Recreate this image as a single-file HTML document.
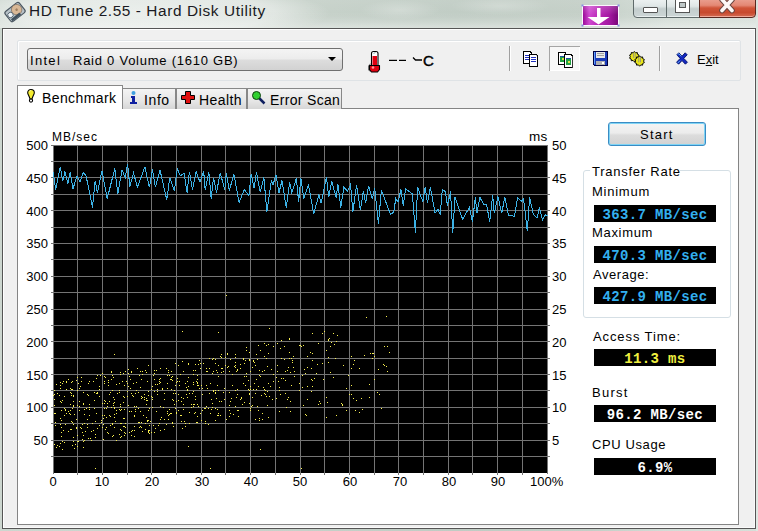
<!DOCTYPE html>
<html><head><meta charset="utf-8">
<style>
*{margin:0;padding:0;box-sizing:border-box}
html,body{width:758px;height:531px;overflow:hidden}
body{position:relative;font-family:"Liberation Sans",sans-serif;color:#000;
background:linear-gradient(90deg,#cdd7d0 0%,#c6d1c9 40%,#c0ccc4 60%,#c4cfc7 78%,#d3dcd6 88%,#d6dfd9 100%)}
.a{position:absolute}
.t{position:absolute;white-space:nowrap;line-height:1}
#title{left:29px;top:3px;font-size:15.4px;color:#1a1a22;letter-spacing:0.58px}
#client{left:2px;top:28px;width:754px;height:501px;background:#f0f0f0;border:1px solid #555;box-shadow:inset 1px 1px 0 #fff,inset -1px -1px 0 #fafafa}
#tb{left:17px;top:40px;width:724px;height:41px;border:1px solid #dfe3e6;border-radius:2px;box-shadow:inset 1px 1px 0 #fff}
#combo{left:27px;top:48px;width:316px;height:23px;border:1px solid #707070;border-radius:3px;
background:linear-gradient(#f4f4f4 0%,#ececec 48%,#dddddd 52%,#d2d2d2 100%)}
.lbl{font-size:13px}
#panel{left:17px;top:108px;width:722px;height:417px;background:#fff;border:1px solid #848484}
.tab{position:absolute;top:88px;height:21px;border:1px solid #888;border-bottom:none;
background:linear-gradient(#f4f4f4,#e6e6e6 60%,#d6d6d6)}
#tab1{left:17px;top:85px;width:106px;height:24px;background:#fff;z-index:2}
.box{position:absolute;left:594px;width:122px;height:17px;background:#000;color:#33b0f0;font-family:"Liberation Mono",monospace;font-weight:bold;font-size:14px;text-align:center;line-height:20px;letter-spacing:0.35px;overflow:hidden;white-space:nowrap}
</style></head><body>
<!-- title bar -->
<div class="a" style="left:0;top:0;width:758px;height:28px;background:radial-gradient(ellipse 185px 28px at 145px 13px,rgba(255,255,255,.62),rgba(255,255,255,.45) 70%,rgba(255,255,255,0) 100%),radial-gradient(ellipse 40px 10px at 400px 10px,rgba(255,255,255,.25),rgba(255,255,255,0)),radial-gradient(ellipse 50px 9px at 500px 6px,rgba(255,255,255,.22),rgba(255,255,255,0))"></div>
<div class="a" style="left:0;top:0;width:758px;height:28px;background:linear-gradient(rgba(255,255,255,.08),rgba(255,255,255,0) 60%,rgba(255,255,255,.15))"></div>
<div class="a" style="left:0;top:12px;width:758px;height:16px;background:linear-gradient(rgba(255,255,255,0),rgba(255,255,255,.12) 60%,rgba(255,255,255,.3))"></div>
<svg class="a" style="left:1px;top:-1px" width="26" height="25" viewBox="0 0 26 25"><g transform="translate(1.5 1.6) scale(.9)">
<g transform="rotate(-38 14 12)"><rect x="3.5" y="5.5" width="20" height="14" rx="2.5" fill="#b8c2c8" stroke="#4a5660" stroke-width="1.3"/>
<circle cx="16.5" cy="11.5" r="5.8" fill="#d9b896" stroke="#6a5a4a" stroke-width=".6"/><circle cx="16.5" cy="11.5" r="1.4" fill="#a08060"/>
<circle cx="7.5" cy="12" r="3" fill="#eef4f8" stroke="#50606c" stroke-width="1"/><rect x="5" y="16" width="12" height="3" fill="#40505c"/></g></g></svg>
<div id="title" class="t">HD Tune 2.55 - Hard Disk Utility</div>
<!-- purple button -->
<div class="a" style="left:582px;top:5px;width:37px;height:21px;border:1px solid #fdf6ff;background:linear-gradient(90deg,#9a0a98,#cf48cf 18%,#b828b6 45%,#a418a2 75%,#7a067a)"></div>
<div class="a" style="left:583px;top:6px;width:35px;height:9px;background:linear-gradient(rgba(255,255,255,.18),rgba(255,255,255,0))"></div>
<svg class="a" style="left:580px;top:3px" width="41" height="25"><g fill="#8890e0"><rect x="1.5" y="1.5" width="2" height="2"/><rect x="37.5" y="1.5" width="2" height="2"/><rect x="1.5" y="21.5" width="2" height="2"/><rect x="37.5" y="21.5" width="2" height="2"/></g>
<path d="M17 5h3.5v9h9l-11 7.5-11-7.5h9.5z" fill="#fff"/></svg>
<!-- caption buttons -->
<div class="a" style="left:633px;top:-2px;width:34px;height:20px;border:1px solid #5f6a6a;border-radius:0 0 0 4px;background:linear-gradient(#eef2f2,#dfe6e6 40%,#c3cdcd 55%,#cdd6d6);box-shadow:inset 0 -1px 0 #e8eeee"></div>
<div class="a" style="left:666px;top:-2px;width:34px;height:20px;border:1px solid #5f6a6a;background:linear-gradient(#eef2f2,#dfe6e6 40%,#c3cdcd 55%,#cdd6d6);box-shadow:inset 0 -1px 0 #e8eeee"></div>
<div class="a" style="left:699px;top:-2px;width:57px;height:20px;border:1px solid #5a2820;border-radius:0 0 4px 0;background:linear-gradient(#eaa090,#e48874 35%,#cf5438 50%,#c84a2e 75%,#d46c54);box-shadow:inset 0 -1px 0 #f0a898"></div>
<div class="a" style="left:643px;top:7px;width:15px;height:6px;background:#fff;border:1px solid #555;border-radius:1px"></div>
<div class="a" style="left:675px;top:-3px;width:15px;height:16px;background:#fff;border:1px solid #555"></div>
<div class="a" style="left:679px;top:2px;width:7px;height:6px;background:#bfc8c8;border:1px solid #555"></div>
<svg class="a" style="left:716px;top:-4px" width="22" height="20" viewBox="0 0 22 20">
<path d="M6 3.5L16 14.5M16 3.5L6 14.5" stroke="#6b4640" stroke-width="5.6" stroke-linecap="round"/>
<path d="M6 3.5L16 14.5M16 3.5L6 14.5" stroke="#fdf8f6" stroke-width="3.6" stroke-linecap="round"/></svg>

<div class="a" style="left:756px;top:17px;width:2px;height:514px;background:#dfe7e2"></div>
<div id="client" class="a"></div>
<div id="tb" class="a"></div>
<div id="combo" class="a"></div>
<div class="t lbl" style="left:30px;top:54px;letter-spacing:1.3px">Intel</div>
<div class="t lbl" style="left:73px;top:54px;letter-spacing:0.75px">Raid 0 Volume (1610 GB)</div>
<svg class="a" style="left:328px;top:57px" width="9" height="5"><path d="M0 0h8l-4 4z" fill="#000"/></svg>
<!-- thermometer -->
<svg class="a" style="left:367px;top:50px" width="14" height="23" viewBox="0 0 14 23">
<path d="M3.5 13l-2.5 3v4l2.5 2z" fill="#777"/>
<rect x="4.5" y="1.5" width="6.5" height="15" rx="2" fill="#fff" stroke="#000" stroke-width="1.1"/>
<rect x="5.5" y="6" width="4.5" height="11" fill="#e00010"/>
<path d="M6.5 3.5l2 -1" stroke="#8aa" stroke-width="1"/>
<path d="M2.5 15.5h10v4l-2 2.5h-6l-2-2.5z" fill="#e00010" stroke="#000" stroke-width="1.1" stroke-linejoin="round"/>
<circle cx="6" cy="17.5" r="1.3" fill="#ff9a9a"/>
</svg>
<div class="a" style="left:389px;top:60px;width:8px;height:1px;background:#000"></div>
<div class="a" style="left:389px;top:59px;width:8px;height:1px;background:#bbb"></div>
<div class="a" style="left:399px;top:60px;width:7px;height:1px;background:#000"></div>
<div class="a" style="left:399px;top:59px;width:7px;height:1px;background:#bbb"></div>
<svg class="a" style="left:411px;top:55px" width="12" height="8"><path d="M2 2.5l2.5 2.5H11" fill="none" stroke="#000" stroke-width="1.3"/></svg>
<div class="t" style="left:423px;top:53px;font-size:15px;-webkit-text-stroke:0.45px #000">C</div>
<!-- separators -->
<div class="a" style="left:509px;top:46px;width:1px;height:25px;background:#a0a0a0;box-shadow:1px 0 0 #fff"></div>
<div class="a" style="left:659px;top:46px;width:1px;height:25px;background:#a0a0a0;box-shadow:1px 0 0 #fff"></div>
<!-- icons -->
<svg class="a" style="left:522px;top:50px" width="18" height="18" viewBox="0 0 18 18" shape-rendering="crispEdges">
<path d="M1 1h7l2 2v11H1z" fill="#000"/><path d="M2 2h6v1h1v10H2z" fill="#fff"/>
<path d="M3 5h6v1H3zM3 7h6v1H3zM3 9h6v1H3z" fill="#2030c0"/>
<path d="M7 4h7l2 2v11H7z" fill="#000"/><path d="M8 5h5l1 1h1v10H8z" fill="#fff"/><path d="M13 5h1v1h1v-1h-1z" fill="#aaa"/>
<path d="M9 7h5v1H9zM9 9h5v1H9zM9 11h5v1H9z" fill="#2030c0"/></svg>
<div class="a" style="left:549px;top:46px;width:31px;height:25px;background:#f7f7f7;border-top:1px solid #a5a5a5;border-left:1px solid #a5a5a5;box-shadow:inset -1px -1px 0 #fff"></div>
<svg class="a" style="left:557px;top:51px" width="18" height="18" viewBox="0 0 18 18" shape-rendering="crispEdges">
<path d="M1 1h7l1 1v12H1z" fill="#000"/><path d="M2 2h6v11H2z" fill="#fff"/>
<rect x="3" y="5" width="5" height="6" fill="#20a040"/><rect x="3" y="5" width="5" height="1" fill="#2050a0"/><rect x="5" y="7" width="2" height="2" fill="#d8e040"/>
<path d="M7 3h7l2 2v12H7z" fill="#000"/><path d="M8 4h5l1 1h1v11H8z" fill="#fff"/><path d="M13 4h1v1h1" fill="#999"/>
<rect x="9" y="7" width="5" height="7" fill="#20a040"/><rect x="9" y="7" width="5" height="1" fill="#2050a0"/><rect x="11" y="10" width="2" height="2" fill="#d8e040"/><rect x="15" y="5" width="1" height="12" fill="#333"/></svg>
<svg class="a" style="left:592px;top:50px" width="17" height="17" viewBox="0 0 17 17" shape-rendering="crispEdges">
<path d="M1 1h15v15H2l-1-1z" fill="#000040"/><rect x="2" y="2" width="13" height="13" fill="#1a3ab8"/><rect x="2" y="2" width="1" height="12" fill="#60a0ff"/>
<rect x="4" y="2" width="9" height="6" fill="#e8e8e8"/><path d="M5 3h7v1H5zM5 5h7v1H5z" fill="#a0a0a0"/>
<rect x="4" y="11" width="9" height="4" fill="#b0b0b0"/><rect x="10" y="12" width="2" height="2" fill="#fff"/></svg>
<svg class="a" style="left:627px;top:49px" width="20" height="19" viewBox="0 0 20 19"><g transform="translate(1.6 1.4) scale(.88)">
<g fill="#e8e41c" stroke="#000" stroke-width="1.1" stroke-linejoin="round">
<path d="M6.5 1.2l1.4 1.6 2-.4.2 2 1.8.9-.9 1.8.9 1.8-1.8.9-.2 2-2-.4-1.4 1.6-1.4-1.6-2 .4-.2-2-1.8-.9.9-1.8-.9-1.8 1.8-.9.2-2 2 .4z"/>
<path d="M12.5 6.2l1.4 1.6 2-.4.2 2 1.8.9-.9 1.8.9 1.8-1.8.9-.2 2-2-.4-1.4 1.6-1.4-1.6-2 .4-.2-2-1.8-.9.9-1.8-.9-1.8 1.8-.9.2-2 2 .4z"/></g>
<path d="M5.5 2.5v6M7.5 2.5v6M11.5 7.5v6M13.5 7.5v6" stroke="#8a8a8a" stroke-width=".9"/></g></svg>
<svg class="a" style="left:675px;top:52px" width="14" height="14" viewBox="0 0 14 14">
<path d="M1.8 2.8l2-2 3.2 3.4 3.2-3.4 2 2-3.4 3.6 3.6 3.8-2 2-3.4-3.6-3.4 3.6-2-2 3.6-3.8z" fill="#1428c0" stroke="#00106a" stroke-width=".9" stroke-linejoin="round"/>
<path d="M2.6 2.8l1.2-1.1 2.4 2.6M2.8 11l2.2-2.3" fill="none" stroke="#6ec0ff" stroke-width=".9"/></svg>
<div class="t lbl" style="left:697px;top:53px">E<u>x</u>it</div>

<!-- tabs -->
<div id="panel" class="a"></div>
<div id="tab1" class="tab"></div>
<div class="tab" style="left:122px;width:54px"></div>
<div class="tab" style="left:176px;width:71px"></div>
<div class="tab" style="left:247px;width:95px"></div>
<svg class="a" style="left:26px;top:88px;z-index:3" width="10" height="15" viewBox="0 0 10 15">
<path d="M5 1.5c2 0 3.3 1.4 3.3 3.2 0 1.6-1.6 3.2-2.3 6.3h-2C3.3 7.9 1.7 6.3 1.7 4.7 1.7 2.9 3 1.5 5 1.5z" fill="#f4ec30" stroke="#000" stroke-width="1.1"/>
<path d="M3.2 3.5q.8-1 2-1" stroke="#fffbc0" fill="none" stroke-width=".9"/>
<circle cx="5" cy="12.6" r="1.6" fill="#fff" stroke="#000" stroke-width="1.1"/></svg>
<div class="t" style="left:42px;top:91px;font-size:14px;z-index:3;letter-spacing:0.4px">Benchmark</div>
<svg class="a" style="left:129px;top:91px" width="9" height="13" viewBox="0 0 9 13"><circle cx="4.5" cy="2" r="2" fill="#40a0e0"/><path d="M2 5h4v6h2v2H1v-2h2V7H2z" fill="#1020a0"/></svg>
<div class="t" style="left:144px;top:93px;font-size:14px;letter-spacing:0.6px">Info</div>
<svg class="a" style="left:181px;top:91px" width="14" height="13" viewBox="0 0 14 13"><path d="M4.5 .5h5v4h4v4h-4v4h-5v-4h-4v-4h4z" fill="#e01010" stroke="#000"/></svg>
<div class="t" style="left:199px;top:93px;font-size:14px;letter-spacing:0.4px">Health</div>
<svg class="a" style="left:252px;top:91px" width="14" height="14" viewBox="0 0 14 14"><path d="M6 6l6.5 6.5" stroke="#102060" stroke-width="2.5"/><circle cx="4.5" cy="4.5" r="4" fill="#30d030" stroke="#104010"/></svg>
<div class="t" style="left:270px;top:93px;font-size:14px;letter-spacing:0.33px">Error Scan</div>

<!-- chart -->
<div class="t" style="left:52px;top:131px;font-size:12px;letter-spacing:1px">MB/sec</div>
<div class="t" style="left:529px;top:130px;font-size:13.5px;letter-spacing:0.3px">ms</div>
<svg class="a" style="left:0;top:0" width="758" height="531">
<g transform="translate(53 145)">
<rect x="0" y="0" width="495" height="328" fill="#000"/>
<path d="M24.5 0V328M49.5 0V328M74.5 0V328M98.5 0V328M123.5 0V328M148.5 0V328M172.5 0V328M197.5 0V328M222.5 0V328M247.5 0V328M271.5 0V328M296.5 0V328M321.5 0V328M345.5 0V328M370.5 0V328M395.5 0V328M419.5 0V328M444.5 0V328M469.5 0V328M0 16.5H495M0 32.5H495M0 49.5H495M0 65.5H495M0 82.5H495M0 98.5H495M0 114.5H495M0 131.5H495M0 147.5H495M0 164.5H495M0 180.5H495M0 196.5H495M0 213.5H495M0 229.5H495M0 245.5H495M0 262.5H495M0 278.5H495M0 295.5H495M0 311.5H495" stroke="#747474" stroke-width="1"/><path d="M-2 0.5H495M0.5 0V329M494.5 0V329" stroke="#747474"/><path d="M-2 16.5H0M495 16.5H497M-2 32.5H0M495 32.5H497M-2 49.5H0M495 49.5H497M-2 65.5H0M495 65.5H497M-2 82.5H0M495 82.5H497M-2 98.5H0M495 98.5H497M-2 114.5H0M495 114.5H497M-2 131.5H0M495 131.5H497M-2 147.5H0M495 147.5H497M-2 164.5H0M495 164.5H497M-2 180.5H0M495 180.5H497M-2 196.5H0M495 196.5H497M-2 213.5H0M495 213.5H497M-2 229.5H0M495 229.5H497M-2 245.5H0M495 245.5H497M-2 262.5H0M495 262.5H497M-2 278.5H0M495 278.5H497M-2 295.5H0M495 295.5H497M-2 311.5H0M495 311.5H497M24.5 328V330M49.5 328V330M74.5 328V330M98.5 328V330M123.5 328V330M148.5 328V330M172.5 328V330M197.5 328V330M222.5 328V330M247.5 328V330M271.5 328V330M296.5 328V330M321.5 328V330M345.5 328V330M370.5 328V330M395.5 328V330M419.5 328V330M444.5 328V330M469.5 328V330" stroke="#747474"/>
<path d="M0.0 26.6 L2.7 44.6 L7.2 22.0 L9.8 36.0 L12.0 26.6 L14.8 38.6 L17.3 27.3 L19.9 43.9 L24.1 31.0 L27.1 37.0 L30.1 27.3 L33.1 31.0 L39.5 62.7 L42.2 35.6 L44.4 47.6 L49.0 25.8 L54.2 53.7 L61.8 23.5 L64.8 49.0 L69.0 25.0 L72.3 32.6 L74.6 19.0 L76.8 41.6 L80.6 28.0 L84.3 42.4 L91.9 22.0 L96.4 42.4 L99.4 24.3 L102.4 42.4 L107.0 25.0 L113.8 55.0 L116.8 32.6 L121.3 46.0 L124.3 23.5 L127.3 31.0 L131.0 28.0 L134.1 47.6 L136.4 26.6 L139.4 44.6 L143.1 26.6 L146.9 37.0 L150.7 26.6 L152.2 44.6 L155.9 27.3 L158.2 53.7 L160.5 32.6 L163.5 47.6 L167.2 28.0 L171.8 44.6 L173.3 28.0 L176.3 46.0 L180.8 28.8 L186.1 57.4 L191.3 44.6 L195.9 50.7 L198.1 28.8 L201.1 43.1 L203.4 27.3 L207.2 46.9 L210.9 32.6 L213.9 67.2 L218.4 35.6 L220.0 40.0 L223.0 29.6 L226.0 47.6 L229.0 35.6 L233.3 62.7 L236.6 37.0 L238.8 47.6 L243.4 33.3 L245.6 56.7 L247.9 33.3 L250.9 53.7 L255.4 39.4 L260.7 68.7 L265.9 49.9 L268.2 58.2 L273.5 31.8 L275.7 52.2 L278.7 36.4 L283.3 52.9 L284.8 38.6 L287.8 62.7 L290.8 42.4 L294.6 46.0 L297.6 39.4 L299.8 67.2 L303.6 40.0 L307.4 65.0 L310.4 46.0 L312.6 58.2 L315.6 40.9 L319.4 53.7 L321.7 43.0 L325.4 78.5 L328.4 45.0 L337.5 69.5 L340.6 67.2 L342.8 53.7 L345.0 56.7 L348.0 44.6 L350.3 60.5 L352.6 43.9 L359.4 49.0 L362.4 88.3 L364.6 42.4 L369.9 56.7 L372.2 41.6 L374.4 58.2 L377.4 42.4 L382.0 68.0 L385.0 64.2 L387.2 69.5 L389.3 44.8 L392.3 46.4 L394.5 60.7 L397.5 46.4 L399.8 87.8 L402.0 52.4 L409.6 74.2 L416.4 62.2 L419.4 76.5 L422.4 52.4 L423.9 68.2 L426.9 52.4 L430.7 59.2 L433.7 59.9 L436.7 77.2 L439.7 50.1 L441.2 68.2 L445.0 51.6 L448.7 68.2 L451.8 52.4 L455.5 70.5 L461.5 71.2 L464.6 52.4 L468.3 56.1 L470.6 53.9 L474.3 86.3 L476.6 52.4 L480.4 69.7 L484.1 72.7 L486.4 62.2 L489.4 75.0 L492.4 69.7 L494.7 71.2" fill="none" stroke="#3cb2e6" stroke-width="1" shape-rendering="crispEdges"/>
<path d="M0 250h1v1h-1zM1 245h1v1h-1zM1 249h1v1h-1zM1 254h1v1h-1zM1 260h1v1h-1zM1 268h1v1h-1zM1 299h1v1h-1zM2 268h1v1h-1zM2 277h1v1h-1zM2 280h1v1h-1zM3 239h1v1h-1zM3 302h1v1h-1zM4 248h1v1h-1zM4 300h1v1h-1zM6 250h1v1h-1zM6 301h1v1h-1zM7 237h1v1h-1zM7 240h1v1h-1zM7 243h1v1h-1zM7 256h1v1h-1zM7 273h1v1h-1zM7 279h1v1h-1zM7 298h1v1h-1zM8 257h1v1h-1zM8 265h1v1h-1zM8 275h1v1h-1zM8 282h1v1h-1zM8 287h1v1h-1zM8 291h1v1h-1zM9 238h1v1h-1zM9 255h1v1h-1zM9 296h1v1h-1zM9 304h1v1h-1zM10 236h1v1h-1zM10 285h1v1h-1zM11 251h1v1h-1zM11 263h1v1h-1zM11 270h1v1h-1zM11 297h1v1h-1zM12 264h1v1h-1zM12 265h1v1h-1zM12 279h1v1h-1zM13 236h1v1h-1zM13 237h1v1h-1zM13 244h1v1h-1zM13 268h1v1h-1zM15 234h1v1h-1zM15 266h1v1h-1zM15 286h1v1h-1zM16 268h1v1h-1zM17 243h1v1h-1zM17 247h1v1h-1zM17 259h1v1h-1zM17 265h1v1h-1zM17 269h1v1h-1zM17 284h1v1h-1zM18 237h1v1h-1zM18 244h1v1h-1zM18 248h1v1h-1zM18 250h1v1h-1zM18 276h1v1h-1zM18 284h1v1h-1zM19 236h1v1h-1zM19 244h1v1h-1zM19 263h1v1h-1zM19 277h1v1h-1zM19 300h1v1h-1zM20 250h1v1h-1zM20 251h1v1h-1zM20 256h1v1h-1zM20 260h1v1h-1zM20 261h1v1h-1zM20 279h1v1h-1zM20 292h1v1h-1zM20 296h1v1h-1zM21 269h1v1h-1zM21 303h1v1h-1zM22 299h1v1h-1zM23 235h1v1h-1zM23 274h1v1h-1zM23 282h1v1h-1zM23 283h1v1h-1zM24 232h1v1h-1zM24 245h1v1h-1zM24 260h1v1h-1zM24 290h1v1h-1zM24 296h1v1h-1zM24 301h1v1h-1zM25 238h1v1h-1zM25 296h1v1h-1zM26 243h1v1h-1zM26 256h1v1h-1zM26 261h1v1h-1zM26 265h1v1h-1zM27 241h1v1h-1zM27 282h1v1h-1zM28 232h1v1h-1zM28 236h1v1h-1zM28 283h1v1h-1zM29 279h1v1h-1zM29 287h1v1h-1zM29 294h1v1h-1zM30 247h1v1h-1zM30 258h1v1h-1zM30 259h1v1h-1zM30 290h1v1h-1zM30 296h1v1h-1zM30 302h1v1h-1zM31 264h1v1h-1zM31 269h1v1h-1zM31 278h1v1h-1zM31 295h1v1h-1zM32 286h1v1h-1zM33 263h1v1h-1zM34 249h1v1h-1zM34 274h1v1h-1zM34 279h1v1h-1zM34 282h1v1h-1zM35 238h1v1h-1zM35 250h1v1h-1zM35 293h1v1h-1zM36 236h1v1h-1zM36 259h1v1h-1zM36 262h1v1h-1zM36 264h1v1h-1zM36 270h1v1h-1zM37 293h1v1h-1zM38 286h1v1h-1zM38 295h1v1h-1zM39 278h1v1h-1zM40 236h1v1h-1zM40 285h1v1h-1zM41 247h1v1h-1zM41 255h1v1h-1zM41 263h1v1h-1zM42 276h1v1h-1zM42 289h1v1h-1zM42 292h1v1h-1zM42 323h1v1h-1zM43 233h1v1h-1zM43 248h1v1h-1zM43 268h1v1h-1zM44 230h1v1h-1zM44 247h1v1h-1zM44 248h1v1h-1zM44 283h1v1h-1zM46 241h1v1h-1zM46 244h1v1h-1zM46 251h1v1h-1zM46 280h1v1h-1zM47 230h1v1h-1zM48 275h1v1h-1zM48 277h1v1h-1zM49 228h1v1h-1zM49 258h1v1h-1zM49 270h1v1h-1zM49 282h1v1h-1zM50 273h1v1h-1zM50 279h1v1h-1zM50 294h1v1h-1zM51 231h1v1h-1zM51 236h1v1h-1zM51 238h1v1h-1zM51 255h1v1h-1zM51 258h1v1h-1zM51 263h1v1h-1zM51 270h1v1h-1zM52 232h1v1h-1zM52 256h1v1h-1zM52 284h1v1h-1zM53 263h1v1h-1zM53 272h1v1h-1zM53 282h1v1h-1zM54 258h1v1h-1zM54 261h1v1h-1zM54 287h1v1h-1zM55 235h1v1h-1zM55 237h1v1h-1zM55 240h1v1h-1zM55 288h1v1h-1zM56 249h1v1h-1zM56 256h1v1h-1zM56 270h1v1h-1zM57 247h1v1h-1zM57 271h1v1h-1zM57 280h1v1h-1zM58 226h1v1h-1zM58 227h1v1h-1zM58 234h1v1h-1zM58 262h1v1h-1zM59 230h1v1h-1zM59 245h1v1h-1zM59 278h1v1h-1zM59 279h1v1h-1zM59 291h1v1h-1zM60 232h1v1h-1zM60 252h1v1h-1zM60 258h1v1h-1zM60 260h1v1h-1zM60 290h1v1h-1zM61 209h1v1h-1zM61 254h1v1h-1zM61 257h1v1h-1zM61 262h1v1h-1zM61 263h1v1h-1zM61 269h1v1h-1zM61 272h1v1h-1zM61 282h1v1h-1zM62 276h1v1h-1zM63 239h1v1h-1zM63 265h1v1h-1zM63 268h1v1h-1zM63 295h1v1h-1zM64 248h1v1h-1zM66 238h1v1h-1zM66 245h1v1h-1zM66 247h1v1h-1zM66 264h1v1h-1zM66 289h1v1h-1zM67 227h1v1h-1zM67 229h1v1h-1zM67 259h1v1h-1zM67 261h1v1h-1zM67 265h1v1h-1zM67 278h1v1h-1zM67 284h1v1h-1zM67 292h1v1h-1zM68 264h1v1h-1zM68 278h1v1h-1zM68 285h1v1h-1zM68 291h1v1h-1zM69 236h1v1h-1zM70 228h1v1h-1zM70 251h1v1h-1zM70 257h1v1h-1zM70 273h1v1h-1zM70 281h1v1h-1zM71 240h1v1h-1zM71 252h1v1h-1zM71 264h1v1h-1zM71 273h1v1h-1zM71 281h1v1h-1zM71 287h1v1h-1zM71 290h1v1h-1zM72 226h1v1h-1zM72 278h1v1h-1zM72 282h1v1h-1zM72 288h1v1h-1zM73 236h1v1h-1zM74 238h1v1h-1zM74 246h1v1h-1zM74 251h1v1h-1zM75 224h1v1h-1zM75 228h1v1h-1zM75 241h1v1h-1zM75 260h1v1h-1zM76 231h1v1h-1zM76 266h1v1h-1zM76 287h1v1h-1zM77 234h1v1h-1zM77 243h1v1h-1zM78 226h1v1h-1zM78 227h1v1h-1zM78 248h1v1h-1zM78 266h1v1h-1zM78 286h1v1h-1zM78 290h1v1h-1zM79 250h1v1h-1zM79 285h1v1h-1zM80 238h1v1h-1zM80 251h1v1h-1zM81 261h1v1h-1zM81 270h1v1h-1zM81 271h1v1h-1zM81 281h1v1h-1zM81 285h1v1h-1zM81 291h1v1h-1zM82 248h1v1h-1zM82 264h1v1h-1zM82 266h1v1h-1zM83 237h1v1h-1zM83 245h1v1h-1zM83 261h1v1h-1zM84 223h1v1h-1zM85 247h1v1h-1zM85 263h1v1h-1zM85 277h1v1h-1zM86 230h1v1h-1zM86 277h1v1h-1zM86 282h1v1h-1zM87 226h1v1h-1zM87 242h1v1h-1zM87 266h1v1h-1zM87 281h1v1h-1zM88 234h1v1h-1zM88 251h1v1h-1zM88 253h1v1h-1zM88 277h1v1h-1zM88 282h1v1h-1zM89 226h1v1h-1zM89 229h1v1h-1zM89 252h1v1h-1zM89 286h1v1h-1zM90 270h1v1h-1zM91 249h1v1h-1zM91 252h1v1h-1zM91 254h1v1h-1zM92 225h1v1h-1zM92 278h1v1h-1zM92 284h1v1h-1zM93 227h1v1h-1zM93 253h1v1h-1zM93 255h1v1h-1zM93 259h1v1h-1zM93 272h1v1h-1zM94 236h1v1h-1zM94 255h1v1h-1zM94 275h1v1h-1zM94 276h1v1h-1zM95 220h1v1h-1zM95 246h1v1h-1zM95 250h1v1h-1zM95 265h1v1h-1zM95 275h1v1h-1zM95 285h1v1h-1zM95 286h1v1h-1zM95 287h1v1h-1zM96 263h1v1h-1zM96 280h1v1h-1zM96 285h1v1h-1zM96 288h1v1h-1zM97 276h1v1h-1zM98 244h1v1h-1zM98 251h1v1h-1zM98 287h1v1h-1zM99 241h1v1h-1zM99 252h1v1h-1zM99 254h1v1h-1zM99 262h1v1h-1zM100 230h1v1h-1zM100 280h1v1h-1zM101 225h1v1h-1zM101 228h1v1h-1zM101 234h1v1h-1zM101 246h1v1h-1zM101 287h1v1h-1zM102 239h1v1h-1zM102 283h1v1h-1zM103 225h1v1h-1zM103 266h1v1h-1zM104 239h1v1h-1zM104 244h1v1h-1zM104 246h1v1h-1zM104 249h1v1h-1zM105 280h1v1h-1zM106 234h1v1h-1zM106 236h1v1h-1zM106 238h1v1h-1zM106 278h1v1h-1zM107 223h1v1h-1zM107 233h1v1h-1zM107 237h1v1h-1zM107 261h1v1h-1zM107 274h1v1h-1zM107 285h1v1h-1zM108 272h1v1h-1zM109 243h1v1h-1zM109 244h1v1h-1zM110 262h1v1h-1zM111 248h1v1h-1zM111 254h1v1h-1zM111 274h1v1h-1zM111 284h1v1h-1zM113 223h1v1h-1zM113 279h1v1h-1zM114 230h1v1h-1zM114 238h1v1h-1zM114 243h1v1h-1zM114 266h1v1h-1zM114 268h1v1h-1zM115 225h1v1h-1zM115 227h1v1h-1zM115 270h1v1h-1zM115 274h1v1h-1zM116 230h1v1h-1zM116 264h1v1h-1zM116 269h1v1h-1zM117 234h1v1h-1zM117 268h1v1h-1zM118 226h1v1h-1zM118 232h1v1h-1zM118 234h1v1h-1zM118 244h1v1h-1zM118 268h1v1h-1zM119 231h1v1h-1zM119 235h1v1h-1zM119 254h1v1h-1zM119 277h1v1h-1zM119 278h1v1h-1zM120 248h1v1h-1zM120 255h1v1h-1zM120 281h1v1h-1zM121 245h1v1h-1zM121 259h1v1h-1zM122 218h1v1h-1zM122 240h1v1h-1zM122 248h1v1h-1zM122 263h1v1h-1zM123 237h1v1h-1zM123 256h1v1h-1zM123 267h1v1h-1zM123 268h1v1h-1zM124 233h1v1h-1zM124 236h1v1h-1zM125 220h1v1h-1zM125 249h1v1h-1zM125 255h1v1h-1zM125 265h1v1h-1zM126 236h1v1h-1zM126 240h1v1h-1zM127 229h1v1h-1zM127 270h1v1h-1zM128 252h1v1h-1zM128 256h1v1h-1zM128 270h1v1h-1zM128 276h1v1h-1zM129 186h1v1h-1zM129 216h1v1h-1zM129 283h1v1h-1zM130 226h1v1h-1zM130 253h1v1h-1zM130 259h1v1h-1zM130 264h1v1h-1zM131 276h1v1h-1zM132 238h1v1h-1zM132 278h1v1h-1zM132 281h1v1h-1zM133 242h1v1h-1zM133 249h1v1h-1zM134 236h1v1h-1zM134 244h1v1h-1zM134 245h1v1h-1zM134 252h1v1h-1zM135 218h1v1h-1zM135 219h1v1h-1zM135 232h1v1h-1zM135 241h1v1h-1zM135 301h1v1h-1zM136 248h1v1h-1zM136 267h1v1h-1zM136 278h1v1h-1zM138 259h1v1h-1zM138 262h1v1h-1zM139 248h1v1h-1zM140 225h1v1h-1zM140 229h1v1h-1zM140 237h1v1h-1zM140 239h1v1h-1zM140 246h1v1h-1zM140 259h1v1h-1zM140 261h1v1h-1zM141 259h1v1h-1zM141 268h1v1h-1zM142 219h1v1h-1zM142 225h1v1h-1zM142 251h1v1h-1zM142 254h1v1h-1zM142 267h1v1h-1zM143 236h1v1h-1zM143 277h1v1h-1zM144 230h1v1h-1zM144 234h1v1h-1zM144 237h1v1h-1zM144 238h1v1h-1zM144 240h1v1h-1zM144 259h1v1h-1zM144 271h1v1h-1zM144 277h1v1h-1zM145 219h1v1h-1zM145 240h1v1h-1zM145 261h1v1h-1zM146 215h1v1h-1zM146 243h1v1h-1zM147 218h1v1h-1zM147 223h1v1h-1zM147 268h1v1h-1zM148 240h1v1h-1zM148 275h1v1h-1zM149 243h1v1h-1zM149 249h1v1h-1zM149 265h1v1h-1zM150 218h1v1h-1zM151 263h1v1h-1zM152 263h1v1h-1zM152 276h1v1h-1zM152 278h1v1h-1zM153 223h1v1h-1zM153 226h1v1h-1zM153 240h1v1h-1zM153 261h1v1h-1zM154 226h1v1h-1zM154 243h1v1h-1zM155 263h1v1h-1zM155 279h1v1h-1zM156 213h1v1h-1zM156 223h1v1h-1zM156 248h1v1h-1zM157 238h1v1h-1zM157 268h1v1h-1zM157 323h1v1h-1zM158 254h1v1h-1zM158 264h1v1h-1zM159 214h1v1h-1zM159 228h1v1h-1zM159 258h1v1h-1zM159 262h1v1h-1zM160 213h1v1h-1zM160 226h1v1h-1zM160 245h1v1h-1zM160 246h1v1h-1zM162 214h1v1h-1zM162 218h1v1h-1zM162 245h1v1h-1zM162 247h1v1h-1zM162 248h1v1h-1zM162 263h1v1h-1zM162 275h1v1h-1zM163 225h1v1h-1zM163 253h1v1h-1zM164 227h1v1h-1zM164 240h1v1h-1zM164 264h1v1h-1zM164 270h1v1h-1zM165 187h1v1h-1zM165 220h1v1h-1zM165 231h1v1h-1zM165 245h1v1h-1zM165 268h1v1h-1zM165 270h1v1h-1zM166 256h1v1h-1zM167 211h1v1h-1zM167 270h1v1h-1zM168 209h1v1h-1zM168 212h1v1h-1zM168 223h1v1h-1zM168 227h1v1h-1zM168 256h1v1h-1zM169 223h1v1h-1zM170 226h1v1h-1zM170 247h1v1h-1zM171 243h1v1h-1zM171 254h1v1h-1zM172 212h1v1h-1zM172 220h1v1h-1zM173 150h1v1h-1zM173 274h1v1h-1zM174 208h1v1h-1zM174 209h1v1h-1zM174 222h1v1h-1zM175 221h1v1h-1zM176 226h1v1h-1zM176 247h1v1h-1zM176 260h1v1h-1zM176 265h1v1h-1zM176 271h1v1h-1zM177 214h1v1h-1zM177 256h1v1h-1zM177 268h1v1h-1zM178 253h1v1h-1zM179 229h1v1h-1zM179 240h1v1h-1zM180 269h1v1h-1zM181 221h1v1h-1zM182 209h1v1h-1zM182 212h1v1h-1zM182 217h1v1h-1zM182 220h1v1h-1zM182 222h1v1h-1zM182 245h1v1h-1zM182 261h1v1h-1zM183 226h1v1h-1zM183 252h1v1h-1zM184 224h1v1h-1zM184 225h1v1h-1zM184 244h1v1h-1zM184 249h1v1h-1zM184 265h1v1h-1zM185 265h1v1h-1zM185 271h1v1h-1zM187 219h1v1h-1zM187 223h1v1h-1zM187 254h1v1h-1zM188 252h1v1h-1zM188 253h1v1h-1zM189 259h1v1h-1zM190 213h1v1h-1zM190 214h1v1h-1zM190 238h1v1h-1zM191 218h1v1h-1zM191 231h1v1h-1zM191 257h1v1h-1zM192 215h1v1h-1zM192 240h1v1h-1zM193 202h1v1h-1zM193 205h1v1h-1zM193 228h1v1h-1zM193 231h1v1h-1zM195 235h1v1h-1zM195 244h1v1h-1zM196 207h1v1h-1zM196 214h1v1h-1zM196 215h1v1h-1zM196 245h1v1h-1zM196 248h1v1h-1zM196 249h1v1h-1zM196 258h1v1h-1zM197 226h1v1h-1zM197 241h1v1h-1zM197 244h1v1h-1zM197 263h1v1h-1zM197 265h1v1h-1zM198 261h1v1h-1zM199 222h1v1h-1zM199 252h1v1h-1zM199 260h1v1h-1zM200 215h1v1h-1zM200 216h1v1h-1zM200 244h1v1h-1zM201 217h1v1h-1zM201 238h1v1h-1zM202 220h1v1h-1zM202 248h1v1h-1zM202 274h1v1h-1zM203 209h1v1h-1zM203 234h1v1h-1zM203 244h1v1h-1zM204 214h1v1h-1zM204 261h1v1h-1zM205 200h1v1h-1zM205 241h1v1h-1zM205 265h1v1h-1zM206 225h1v1h-1zM206 230h1v1h-1zM206 273h1v1h-1zM206 275h1v1h-1zM207 205h1v1h-1zM207 231h1v1h-1zM207 304h1v1h-1zM208 250h1v1h-1zM209 226h1v1h-1zM209 268h1v1h-1zM209 274h1v1h-1zM210 242h1v1h-1zM211 198h1v1h-1zM211 211h1v1h-1zM211 225h1v1h-1zM211 244h1v1h-1zM211 248h1v1h-1zM212 245h1v1h-1zM212 249h1v1h-1zM213 200h1v1h-1zM213 213h1v1h-1zM213 251h1v1h-1zM214 221h1v1h-1zM214 246h1v1h-1zM214 260h1v1h-1zM215 199h1v1h-1zM215 208h1v1h-1zM215 238h1v1h-1zM215 272h1v1h-1zM216 183h1v1h-1zM216 251h1v1h-1zM217 241h1v1h-1zM218 224h1v1h-1zM219 254h1v1h-1zM220 201h1v1h-1zM220 229h1v1h-1zM220 236h1v1h-1zM223 232h1v1h-1zM223 253h1v1h-1zM224 198h1v1h-1zM224 220h1v1h-1zM224 226h1v1h-1zM225 236h1v1h-1zM226 242h1v1h-1zM226 245h1v1h-1zM226 266h1v1h-1zM227 203h1v1h-1zM227 249h1v1h-1zM228 195h1v1h-1zM228 213h1v1h-1zM228 233h1v1h-1zM230 233h1v1h-1zM231 201h1v1h-1zM231 214h1v1h-1zM232 226h1v1h-1zM232 235h1v1h-1zM232 248h1v1h-1zM233 262h1v1h-1zM234 225h1v1h-1zM234 254h1v1h-1zM235 222h1v1h-1zM235 252h1v1h-1zM236 193h1v1h-1zM236 194h1v1h-1zM236 207h1v1h-1zM236 213h1v1h-1zM237 227h1v1h-1zM237 256h1v1h-1zM237 266h1v1h-1zM238 213h1v1h-1zM238 240h1v1h-1zM239 215h1v1h-1zM239 217h1v1h-1zM240 211h1v1h-1zM240 222h1v1h-1zM241 226h1v1h-1zM241 231h1v1h-1zM246 200h1v1h-1zM246 238h1v1h-1zM246 245h1v1h-1zM247 200h1v1h-1zM248 201h1v1h-1zM248 323h1v1h-1zM249 230h1v1h-1zM249 242h1v1h-1zM250 200h1v1h-1zM250 260h1v1h-1zM251 224h1v1h-1zM252 228h1v1h-1zM252 269h1v1h-1zM253 270h1v1h-1zM254 211h1v1h-1zM254 222h1v1h-1zM254 241h1v1h-1zM254 254h1v1h-1zM257 207h1v1h-1zM258 223h1v1h-1zM258 234h1v1h-1zM258 246h1v1h-1zM259 188h1v1h-1zM259 208h1v1h-1zM259 215h1v1h-1zM259 235h1v1h-1zM259 241h1v1h-1zM261 233h1v1h-1zM263 228h1v1h-1zM264 219h1v1h-1zM265 198h1v1h-1zM265 259h1v1h-1zM266 256h1v1h-1zM267 258h1v1h-1zM269 188h1v1h-1zM269 218h1v1h-1zM270 234h1v1h-1zM271 186h1v1h-1zM273 205h1v1h-1zM273 252h1v1h-1zM273 272h1v1h-1zM274 257h1v1h-1zM275 194h1v1h-1zM275 195h1v1h-1zM275 212h1v1h-1zM275 217h1v1h-1zM276 193h1v1h-1zM277 201h1v1h-1zM277 227h1v1h-1zM278 197h1v1h-1zM280 188h1v1h-1zM280 232h1v1h-1zM281 199h1v1h-1zM282 213h1v1h-1zM283 196h1v1h-1zM283 270h1v1h-1zM284 190h1v1h-1zM288 258h1v1h-1zM289 259h1v1h-1zM289 260h1v1h-1zM290 220h1v1h-1zM293 243h1v1h-1zM293 265h1v1h-1zM295 230h1v1h-1zM296 249h1v1h-1zM298 211h1v1h-1zM298 223h1v1h-1zM298 240h1v1h-1zM298 249h1v1h-1zM300 219h1v1h-1zM300 253h1v1h-1zM301 215h1v1h-1zM302 265h1v1h-1zM303 255h1v1h-1zM306 223h1v1h-1zM306 267h1v1h-1zM308 253h1v1h-1zM309 264h1v1h-1zM311 210h1v1h-1zM313 172h1v1h-1zM316 239h1v1h-1zM316 252h1v1h-1zM317 208h1v1h-1zM319 208h1v1h-1zM319 213h1v1h-1zM320 208h1v1h-1zM321 211h1v1h-1zM321 234h1v1h-1zM324 247h1v1h-1zM325 224h1v1h-1zM326 249h1v1h-1zM328 263h1v1h-1zM330 219h1v1h-1zM331 201h1v1h-1zM331 220h1v1h-1zM333 171h1v1h-1zM333 221h1v1h-1zM334 201h1v1h-1zM334 226h1v1h-1zM336 207h1v1h-1z" fill="#f8f050" shape-rendering="crispEdges"/>
</g></svg>
<div class="t" style="right:710px;top:139px;font-size:13px">500</div>
<div class="t" style="left:552px;top:139px;font-size:13px">50</div>
<div class="t" style="right:710px;top:172px;font-size:13px">450</div>
<div class="t" style="left:552px;top:172px;font-size:13px">45</div>
<div class="t" style="right:710px;top:205px;font-size:13px">400</div>
<div class="t" style="left:552px;top:205px;font-size:13px">40</div>
<div class="t" style="right:710px;top:237px;font-size:13px">350</div>
<div class="t" style="left:552px;top:237px;font-size:13px">35</div>
<div class="t" style="right:710px;top:270px;font-size:13px">300</div>
<div class="t" style="left:552px;top:270px;font-size:13px">30</div>
<div class="t" style="right:710px;top:303px;font-size:13px">250</div>
<div class="t" style="left:552px;top:303px;font-size:13px">25</div>
<div class="t" style="right:710px;top:336px;font-size:13px">200</div>
<div class="t" style="left:552px;top:336px;font-size:13px">20</div>
<div class="t" style="right:710px;top:369px;font-size:13px">150</div>
<div class="t" style="left:552px;top:369px;font-size:13px">15</div>
<div class="t" style="right:710px;top:401px;font-size:13px">100</div>
<div class="t" style="left:552px;top:401px;font-size:13px">10</div>
<div class="t" style="right:710px;top:434px;font-size:13px">50</div>
<div class="t" style="left:552px;top:434px;font-size:13px">5</div>
<div class="t" style="left:13px;width:80px;text-align:center;top:475px;font-size:13px">0</div>
<div class="t" style="left:62px;width:80px;text-align:center;top:475px;font-size:13px">10</div>
<div class="t" style="left:112px;width:80px;text-align:center;top:475px;font-size:13px">20</div>
<div class="t" style="left:162px;width:80px;text-align:center;top:475px;font-size:13px">30</div>
<div class="t" style="left:211px;width:80px;text-align:center;top:475px;font-size:13px">40</div>
<div class="t" style="left:260px;width:80px;text-align:center;top:475px;font-size:13px">50</div>
<div class="t" style="left:310px;width:80px;text-align:center;top:475px;font-size:13px">60</div>
<div class="t" style="left:360px;width:80px;text-align:center;top:475px;font-size:13px">70</div>
<div class="t" style="left:409px;width:80px;text-align:center;top:475px;font-size:13px">80</div>
<div class="t" style="left:458px;width:80px;text-align:center;top:475px;font-size:13px">90</div>
<div class="t" style="left:530px;top:475px;font-size:13px">100%</div>

<!-- right panel -->
<div class="a" style="left:608px;top:122px;width:98px;height:24px;border:1px solid #3a8cc4;border-radius:3px;box-shadow:inset 0 0 0 1px #7fd4f5;background:linear-gradient(#f4f4f4,#ececec 45%,#dcdcdc 55%,#d2d2d2)"></div>
<div class="t lbl" style="left:640px;top:128px;letter-spacing:1.25px">Start</div>
<div class="a" style="left:583px;top:170px;width:148px;height:148px;border:1px solid #d5dfe5;border-radius:3px"></div>
<div class="a" style="left:590px;top:164px;width:90px;height:12px;background:#fff"></div>
<div class="t lbl" style="left:592px;top:165px;letter-spacing:0.75px">Transfer Rate</div>
<div class="t lbl" style="left:592px;top:185px;letter-spacing:0.75px">Minimum</div>
<div class="box" style="top:205px">363.7 MB/sec</div>
<div class="t lbl" style="left:592px;top:226px;letter-spacing:0.67px">Maximum</div>
<div class="box" style="top:246px">470.3 MB/sec</div>
<div class="t lbl" style="left:593px;top:268px;letter-spacing:0.54px">Average:</div>
<div class="box" style="top:287px">427.9 MB/sec</div>
<div class="t lbl" style="left:593px;top:330px;letter-spacing:0.9px">Access Time:</div>
<div class="box" style="top:349px;color:#f0f040">11.3 ms</div>
<div class="t lbl" style="left:592px;top:386px;letter-spacing:1.25px">Burst</div>
<div class="box" style="top:405px;color:#fff">96.2 MB/sec</div>
<div class="t lbl" style="left:592px;top:438px;letter-spacing:0.6px">CPU Usage</div>
<div class="box" style="top:458px;color:#fff">6.9%</div>
</body></html>
